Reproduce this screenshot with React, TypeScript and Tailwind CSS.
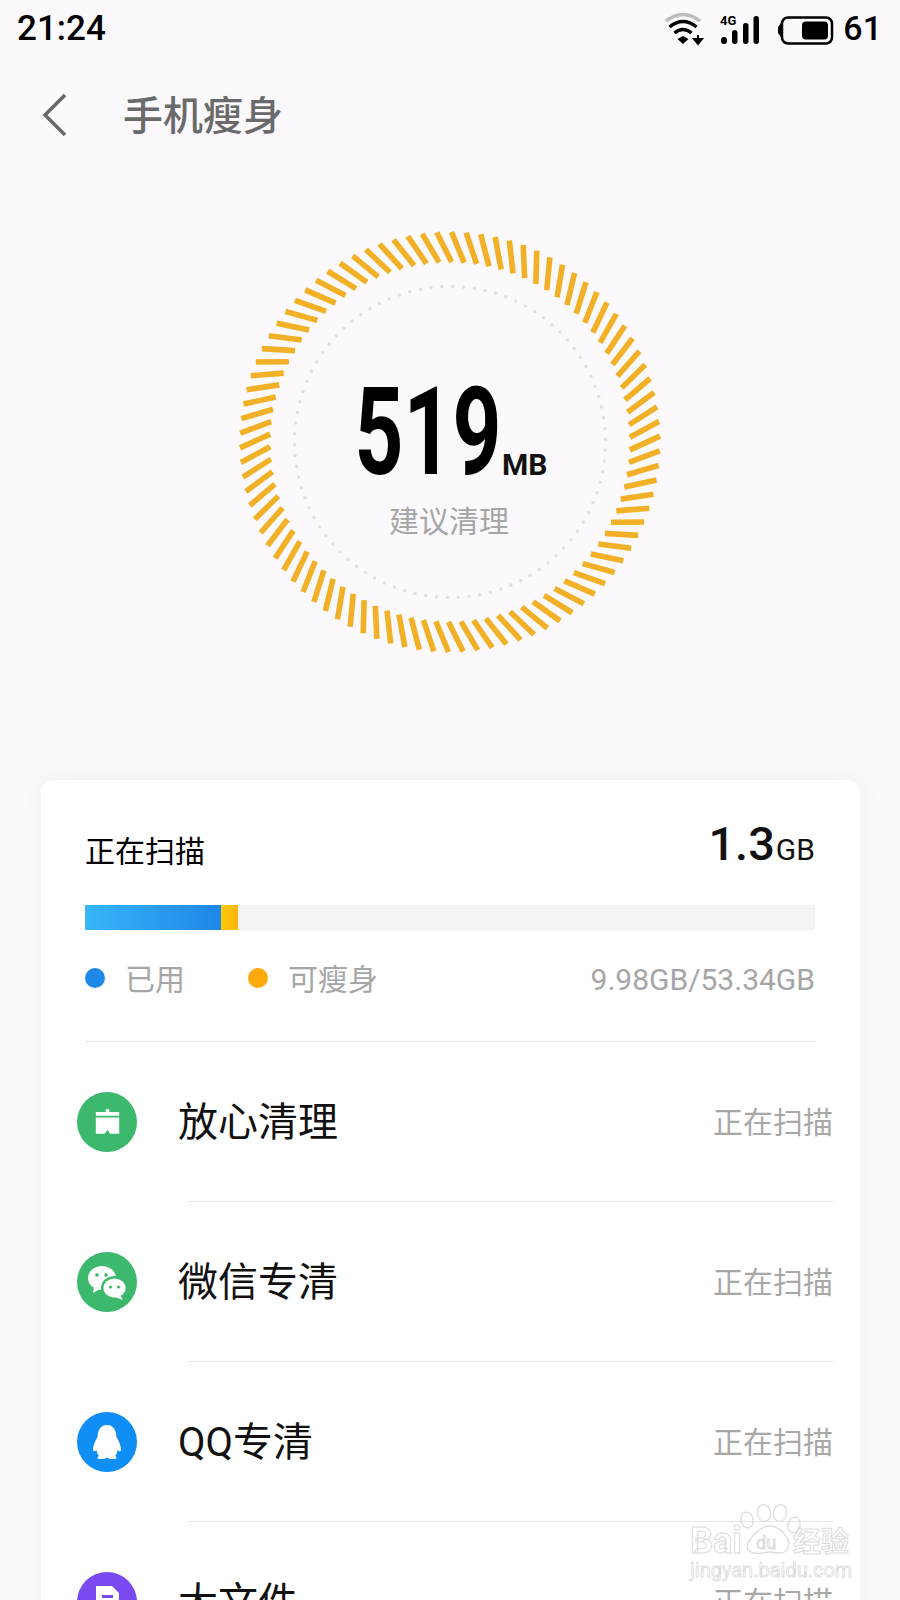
import React from "react";

const C = 220;
function pt(r: number, deg: number) {
  const a = (deg * Math.PI) / 180;
  return { x: C + r * Math.sin(a), y: C - r * Math.cos(a) };
}

function Ring() {
  const ticks = Array.from({ length: 90 }, (_, i) => {
    const o = pt(210, i * 4 + 0.4);
    const n = pt(180, i * 4 + 4.5);
    return <line key={i} x1={o.x} y1={o.y} x2={n.x} y2={n.y} stroke="#f1b026" strokeWidth="5.6" />;
  });
  const dots = Array.from({ length: 90 }, (_, i) => {
    const p = pt(155.5, i * 4 + 1);
    return <circle key={i} cx={p.x} cy={p.y} r="1.8" fill="#e1e1e5" />;
  });
  return (
    <svg width="440" height="440" viewBox="0 0 440 440" className="block">
      {ticks}
      {dots}
    </svg>
  );
}

function StatusIcons() {
  return (
    <svg width="175" height="36" viewBox="0 0 175 36" className="block">
      <path d="M6 11 Q23 -2 40 11" fill="none" stroke="#bdbdbd" strokeWidth="3.4" />
      <path d="M9.5 17 Q23 6 36.5 17" fill="none" stroke="#000" strokeWidth="3.4" />
      <path d="M14.5 23 Q23 16 31.5 23" fill="none" stroke="#000" strokeWidth="3.4" />
      <path d="M17.5 29 L23 26 L28.500 29 L23 34 Z" fill="#000" />
      <path d="M38 25 V31 M34 29 L38 34 L42 29 Z" stroke="#000" strokeWidth="2" fill="#000" />
      <text x="60" y="15" fontSize="13" fontWeight="700" fontFamily="Roboto, sans-serif" fill="#000">4G</text>
      <rect x="61" y="27" width="6" height="7" rx="3" fill="#000" />
      <rect x="72" y="20" width="5.500" height="14" rx="2.750" fill="#000" />
      <rect x="83" y="13" width="5.500" height="21" rx="2.750" fill="#000" />
      <rect x="93.500" y="6" width="5.500" height="28" rx="2.750" fill="#000" />
      <path d="M118 17 L121 13 V27 L118 23 Z" fill="#000" />
      <rect x="122" y="7.500" width="50" height="26" rx="6" fill="none" stroke="#000" strokeWidth="2.500" />
      <rect x="142" y="11.500" width="26" height="18" rx="4" fill="#000" />
    </svg>
  );
}

function BroomIcon() {
  return (
    <svg viewBox="0 0 60 60" className="w-[27px] h-[29px]" preserveAspectRatio="xMidYMid meet">
      <path d="M26 3 H34 V9 H56 V17 H4 V9 H26 Z M4 21 H56 V57 H36 L30 49 L24 57 H4 Z" fill="#fff" />
    </svg>
  );
}

function WechatIcon() {
  return (
    <svg viewBox="0 0 60 60" className="w-[60px] h-[60px]">
      <ellipse cx="25" cy="26" rx="14" ry="12" fill="#fff" />
      <path d="M17 34 L16 41 L23 37 Z" fill="#fff" />
      <circle cx="20" cy="23" r="1.800" fill="#3cb96c" />
      <circle cx="29" cy="23" r="1.800" fill="#3cb96c" />
      <ellipse cx="37.500" cy="36" rx="13.500" ry="12" fill="#3cb96c" />
      <ellipse cx="37.500" cy="36" rx="11" ry="9.500" fill="#fff" />
      <path d="M43 43 L46 48 L38 45 Z" fill="#fff" />
      <circle cx="33.500" cy="35" r="1.600" fill="#3cb96c" />
      <circle cx="41.500" cy="35" r="1.600" fill="#3cb96c" />
    </svg>
  );
}

function QQIcon() {
  return (
    <svg viewBox="0 0 60 60" className="w-[60px] h-[60px]">
      <path
        d="M30 13 C37 13 39 19 39.500 25 C42 29 44 34 44 38 C43.500 40 42 39.500 40.500 38 C40 41 39.500 42.500 38 44 C40 45 40 47 38 47 H33 L30 45.500 L27 47 H22 C20 47 20 45 22 44 C20.500 42.500 20 41 19.500 38 C18 39.500 16.500 40 16 38 C16 34 18 29 20.500 25 C21 19 23 13 30 13 Z"
        fill="#fff"
      />
    </svg>
  );
}

function DocIcon() {
  return (
    <svg viewBox="0 0 60 60" className="w-[60px] h-[60px]">
      <path d="M19 14 H35 L42 21 V46 H19 Z" fill="#fff" />
      <rect x="25" y="23" width="11" height="3" fill="#7a4af0" />
      <rect x="25" y="30" width="11" height="3" fill="#7a4af0" />
    </svg>
  );
}

const rows = [
  { label: "放心清理", bg: "bg-[#3cb96c]", icon: <BroomIcon /> },
  { label: "微信专清", bg: "bg-[#3cb96c]", icon: <WechatIcon /> },
  { label: "QQ专清", bg: "bg-[#0f8ef5]", icon: <QQIcon /> },
  { label: "大文件", bg: "bg-[#7a4af0]", icon: <DocIcon /> },
];

function Watermark() {
  return (
    <div className="absolute left-[688px] top-[1500px] w-[170px] h-[84px] pointer-events-none">
      <svg width="170" height="60" viewBox="0 0 170 60" className="absolute left-0 top-0">
        <g fill="none" stroke="#dcdcdc" strokeWidth="1.300">
          <ellipse cx="59" cy="20" rx="6" ry="8" transform="rotate(-12 59 20)" />
          <ellipse cx="76" cy="13" rx="6.500" ry="8.500" transform="rotate(-8 76 13)" />
          <ellipse cx="92" cy="13" rx="6.500" ry="8.500" transform="rotate(8 92 13)" />
          <ellipse cx="106" cy="25" rx="6" ry="8" transform="rotate(14 106 25)" />
          <path d="M82 26 C92 26 104 40 100 48 C96 56 88 52 82 52 C76 52 66 56 60 50 C56 42 72 26 82 26 Z" />
        </g>
      </svg>
      <span className="absolute left-[2px] top-[23px] text-[36px] leading-none font-bold text-transparent [-webkit-text-stroke:1px_#dcdcdc] font-[Roboto,sans-serif]">
        Bai
      </span>
      <span className="absolute left-[68px] top-[34px] text-[18px] leading-none text-transparent [-webkit-text-stroke:1px_#dcdcdc] font-[Roboto,sans-serif]">
        du
      </span>
      <span className="absolute left-[105px] top-[26px] text-[28px] leading-none font-bold text-transparent [-webkit-text-stroke:1px_#dcdcdc] font-['Noto_Sans_CJK_SC',sans-serif]">
        经验
      </span>
      <span className="absolute left-[2px] top-[60px] text-[20px] leading-none whitespace-nowrap text-transparent [-webkit-text-stroke:0.8px_#dcdcdc] font-[Roboto,sans-serif]">
        jingyan.baidu.com
      </span>
    </div>
  );
}

export default function App() {
  return (
    <div className="relative w-[900px] h-[1600px] overflow-hidden bg-[#fbf9fc] flex flex-col font-[Roboto,'Noto_Sans_CJK_SC',sans-serif]">
      <div className="h-[56px] shrink-0 flex items-center justify-between pl-[17px] pr-[18px] text-black">
        <span className="text-[35px] font-medium leading-none">21:24</span>
        <div className="flex items-center">
          <StatusIcons />
          <span className="text-[34px] font-medium leading-none ml-[8px]">61</span>
        </div>
      </div>

      <div className="h-[118px] shrink-0 flex items-center">
        <svg width="34" height="48" viewBox="0 0 34 48" className="ml-[38px] block">
          <path d="M27 4 L7 24 L27 44" fill="none" stroke="#6a6a6a" strokeWidth="3.6" />
        </svg>
        <span className="ml-[51px] mt-[4px] text-[40px] leading-none text-[#6a6a6a] font-medium">手机瘦身</span>
      </div>

      <div className="relative w-[440px] h-[440px] shrink-0 ml-[230px] mt-[48px]">
        <Ring />
        <div className="absolute inset-0 pt-[166px] pl-[128px]">
          <div className="flex items-end h-[90px]">
            <div className="w-[139px] h-[90px] flex justify-center items-center">
              <span className="shrink-0 inline-block text-[122px] leading-none font-bold text-black scale-x-[0.7] whitespace-nowrap">
                519
              </span>
            </div>
            <span className="ml-[5px] text-[30px] leading-none font-bold text-[#111] mb-[-2px]">MB</span>
          </div>
          <div className="mt-[26px] ml-[31px] text-[30px] leading-[36px] text-[#a6a6a6]">建议清理</div>
        </div>
      </div>

      <div className="mt-[118px] ml-[41px] w-[819px] flex-1 bg-white rounded-t-[12px] shadow-[0_0_24px_rgba(0,0,0,0.05)]">
        <div className="pl-[44px] pr-[45px]">
          <div className="flex items-end justify-between h-[90px]">
            <span className="text-[30px] leading-[36px] text-black">正在扫描</span>
            <span className="flex items-baseline text-[#111] mb-[3px]">
              <span className="text-[47px] leading-none font-medium">1.3</span>
              <span className="text-[30px] leading-none ml-[1px]">GB</span>
            </span>
          </div>
          <div className="mt-[35px] h-[25px] bg-[#f4f2f5] flex">
            <div className="w-[136px] bg-gradient-to-r from-[#38b6f8] to-[#1f86e8]" />
            <div className="w-[17px] bg-gradient-to-r from-[#fec80a] to-[#fdb50f]" />
          </div>
          <div className="mt-[31px] h-[34px] flex items-center text-[30px] leading-none text-[#a6a6a6]">
            <span className="w-[20px] h-[20px] rounded-full bg-[#1e88e8]" />
            <span className="ml-[20px] pt-[4px]">已用</span>
            <span className="ml-[63px] w-[20px] h-[20px] rounded-full bg-[#fca90e]" />
            <span className="ml-[20px] pt-[4px]">可瘦身</span>
            <span className="ml-auto pt-[4px]">9.98GB/53.34GB</span>
          </div>
          <div className="mt-[46px] h-px bg-[#e6e6e6]" />
        </div>
        <div className="pl-[36px] pr-[27px]">
          {rows.map((r) => (
            <div key={r.label}>
              <div className="h-[159px] flex items-center">
                <div className={`w-[60px] h-[60px] shrink-0 rounded-full flex items-center justify-center ${r.bg}`}>
                  {r.icon}
                </div>
                <div className="ml-[41px] flex-1 flex items-center justify-between pt-[2px]">
                  <span className="text-[40px] leading-none text-[#111]">{r.label}</span>
                  <span className="text-[30px] leading-none text-[#a8a8a8]">正在扫描</span>
                </div>
              </div>
              <div className="ml-[110px] h-px bg-[#e6e6e6]" />
            </div>
          ))}
        </div>
      </div>
      <Watermark />
    </div>
  );
}
